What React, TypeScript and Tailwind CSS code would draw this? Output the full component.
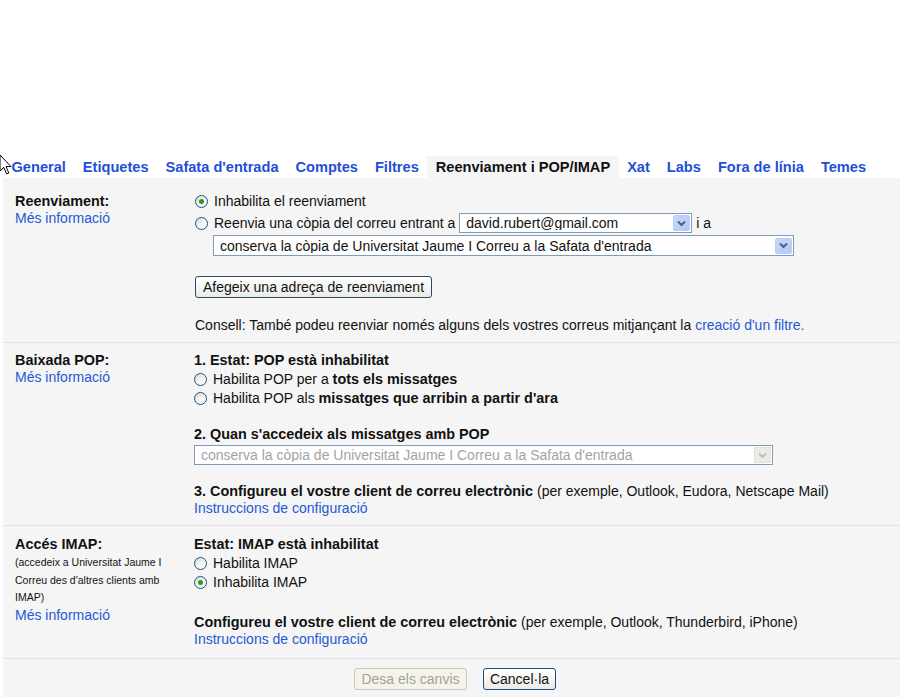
import type { ReactNode } from 'react';

const tabs = ['General', 'Etiquetes', "Safata d'entrada", 'Comptes', 'Filtres', 'Reenviament i POP/IMAP', 'Xat', 'Labs', 'Fora de línia', 'Temes'];

function Radio({ checked = false }: { checked?: boolean }) {
  return (
    <span className="relative inline-flex h-[13px] w-[13px] shrink-0 items-center justify-center rounded-full border border-[#1c5180] bg-gradient-to-br from-[#d8d8d2] via-[#f4f4f2] to-white">
      {checked && <span className="h-[5px] w-[5px] rounded-full bg-[#21a121]" />}
    </span>
  );
}

function RadioRow({ checked, children, h = 'h-[19px]' }: { checked?: boolean; children: ReactNode; h?: string }) {
  return (
    <div className={`flex items-center gap-[6px] ${h}`}>
      <Radio checked={checked} />
      <span>{children}</span>
    </div>
  );
}

function B({ children }: { children: ReactNode }) {
  return <b className="text-[14.4px] font-bold">{children}</b>;
}

function Chevron({ color }: { color: string }) {
  return (
    <svg width="9" height="7" viewBox="0 0 9 7">
      <path d="M1 1.5 L4.5 5 L8 1.5" fill="none" stroke={color} strokeWidth="2" />
    </svg>
  );
}

function Select({ text, width, height, disabled = false }: { text: string; width: string; height: string; disabled?: boolean }) {
  return (
    <div className={`flex items-center border border-[#7f9db9] bg-white pl-[6px] pr-[1px] ${width} ${height}`}>
      <span className={`flex-1 truncate leading-none ${disabled ? 'text-[#a3a3a3]' : 'text-[#111]'}`}>{text}</span>
      {disabled ? (
        <span className="flex h-[16px] w-[17px] items-center justify-center border border-[#e2e2dc] bg-[#ecece6]">
          <Chevron color="#c2c2bc" />
        </span>
      ) : (
        <span className="flex h-[16px] w-[17px] items-center justify-center rounded-[2px] border border-[#b9cdf6] bg-gradient-to-br from-[#c6d7fc] to-[#b2c8f6]">
          <Chevron color="#4d6185" />
        </span>
      )}
    </div>
  );
}

function Link({ children }: { children: ReactNode }) {
  return <span className="text-[#2459d4]">{children}</span>;
}

export default function App() {
  return (
    <div className="relative min-h-[700px] bg-white text-[14px] text-[#111]" style={{ fontFamily: '"Liberation Sans", Arial, sans-serif' }}>
      {/* mouse pointer left in the shot */}
      <svg className="absolute left-[-1px] top-[154px] z-10" width="13" height="22" viewBox="0 0 13 22">
        <path d="M1 1 L1 17 L4.8 13.4 L7.6 20 L9.8 19 L7 12.5 L12 12.5 Z" fill="white" stroke="black" strokeWidth="1" />
      </svg>

      <div className="ml-[3px] flex pt-[156px] text-[14.6px] font-bold leading-[17px]">
        {tabs.map((t) => (
          <div
            key={t}
            className={`px-[8.5px] pb-[2px] pt-[3px] ${t === 'Reenviament i POP/IMAP' ? 'bg-[#f5f5f5] text-[#111]' : 'text-[#1f4fd6]'}`}
          >
            {t}
          </div>
        ))}
      </div>

      <div className="ml-[3px] bg-[#f5f5f5]">
        {/* Reenviament */}
        <section className="flex border-b border-[#e3e3e3] pb-[8px] pl-[12px] pt-[12px]">
          <div className="w-[180px] pt-[3px] leading-[17px]">
            <div><B>Reenviament:</B></div>
            <Link>Més informació</Link>
          </div>
          <div className="flex-1">
            <RadioRow checked h="h-[22px]">Inhabilita el reenviament</RadioRow>
            <div className="flex h-[22px] items-center">
              <Radio />
              <span className="ml-[6px]">Reenvia una còpia del correu entrant a</span>
              <span className="ml-[4px]">
                <Select text="david.rubert@gmail.com" width="w-[233px]" height="h-[20px]" />
              </span>
              <span className="ml-[4px]">i a</span>
            </div>
            <div className="ml-[18px] mt-[1px]">
              <Select text="conserva la còpia de Universitat Jaume I Correu a la Safata d'entrada" width="w-[581px]" height="h-[21px]" />
            </div>
            <button className="mt-[20px] h-[22px] rounded-[3px] border border-[#2b4a6a] bg-gradient-to-b from-white to-[#ebebe6] px-[7px] leading-none">
              Afegeix una adreça de reenviament
            </button>
            <div className="mt-[18px] leading-[18px]">
              Consell: També podeu reenviar només alguns dels vostres correus mitjançant la <Link>creació d'un filtre.</Link>
            </div>
          </div>
        </section>

        {/* Baixada POP */}
        <section className="flex border-b border-[#e3e3e3] pb-[8px] pl-[12px] pt-[9px] leading-[17px]">
          <div className="w-[179px]">
            <div><B>Baixada POP:</B></div>
            <Link>Més informació</Link>
          </div>
          <div className="flex-1">
            <div className="h-[18px]"><B>1. Estat: POP està inhabilitat</B></div>
            <RadioRow>
              Habilita POP per a <B>tots els missatges</B>
            </RadioRow>
            <RadioRow>
              Habilita POP als <B>missatges que arribin a partir d'ara</B>
            </RadioRow>
            <div className="mt-[18px]"><B>2. Quan s'accedeix als missatges amb POP</B></div>
            <div className="mt-[2px]">
              <Select disabled text="conserva la còpia de Universitat Jaume I Correu a la Safata d'entrada" width="w-[579px]" height="h-[20px]" />
            </div>
            <div className="mt-[18px]">
              <B>3. Configureu el vostre client de correu electrònic</B> (per exemple, Outlook, Eudora, Netscape Mail)
            </div>
            <Link>Instruccions de configuració</Link>
          </div>
        </section>

        {/* Accés IMAP */}
        <section className="flex border-b border-[#e3e3e3] pb-[10px] pl-[12px] pt-[10px] leading-[17px]">
          <div className="w-[179px]">
            <div className="h-[18px]"><B>Accés IMAP:</B></div>
            <div className="text-[10.5px] leading-[17.5px]">
              (accedeix a Universitat Jaume I<br />
              Correu des d'altres clients amb<br />
              IMAP)
            </div>
            <div className="leading-[16px]">
              <Link>Més informació</Link>
            </div>
          </div>
          <div className="flex-1">
            <div className="h-[18px]"><B>Estat: IMAP està inhabilitat</B></div>
            <RadioRow>Habilita IMAP</RadioRow>
            <RadioRow checked>Inhabilita IMAP</RadioRow>
            <div className="mt-[22px]">
              <B>Configureu el vostre client de correu electrònic</B> (per exemple, Outlook, Thunderbird, iPhone)
            </div>
            <Link>Instruccions de configuració</Link>
          </div>
        </section>

        {/* buttons */}
        <div className="flex justify-center gap-[16px] pb-[7px] pl-[7px] pt-[9px]">
          <button disabled className="h-[22px] w-[113px] rounded-[3px] border border-[#cac8bb] bg-[#f5f4ea] leading-none text-[#a5a397]">
            Desa els canvis
          </button>
          <button className="h-[22px] w-[73px] rounded-[3px] border border-[#1f4a78] bg-gradient-to-b from-white to-[#ebebe6] leading-none">
            Cancel·la
          </button>
        </div>
      </div>
    </div>
  );
}
